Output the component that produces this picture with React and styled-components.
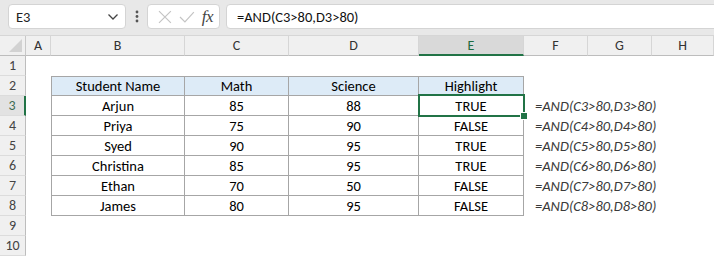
import React from "react";
import styled, { createGlobalStyle } from "styled-components";

const GlobalStyle = createGlobalStyle`
  body {
    margin: 0;
    background: #ffffff;
    font-family: Carlito, "Liberation Sans", Arial, sans-serif;
  }
`;

// formula bar strip
const Toolbar = styled.div`
  height: 36px;
  background: #e8e8e8;
  display: flex;
  align-items: flex-start;
  padding: 4px 0 0 8px;
  box-sizing: border-box;
  overflow: hidden;
  border-bottom: 1px solid #d6d6d6;
`;

const Box = styled.div`
  height: 25px;
  box-sizing: border-box;
  background: #ffffff;
  border: 1px solid #d4d4d4;
  border-radius: 4px;
  display: flex;
  align-items: center;
`;

const NameBox = styled(Box)`
  width: 118px;
  padding: 0 6px 0 7px;
  justify-content: space-between;
  font-size: 14.5px;
  color: #222;
`;

const Dots = styled.div`
  width: 21px;
  display: flex;
  justify-content: center;
  padding-top: 6px;
`;

const FxBox = styled(Box)`
  width: 73px;
  padding: 0 6px 0 10px;
  gap: 7px;
`;

const Fx = styled.span`
  margin-left: auto;
  font-family: "Liberation Serif", serif;
  font-style: italic;
  font-size: 17px;
  color: #444;
  letter-spacing: -0.5px;
`;

const FormulaBox = styled(Box)`
  flex: 1;
  margin-left: 6px;
  margin-right: -8px;
  padding-left: 10px;
  font-size: 14.5px;
  color: #111;
`;

const Sheet = styled.div`
  display: grid;
  grid-template-columns: 26px 25px 134px 104px 130px 105px 64px 64px 62px;
  grid-auto-rows: 20px;
`;

const Corner = styled.div`
  background: #f0f0f0;
  border-right: 1px solid #c8c8c8;
  border-bottom: 1px solid #bdbdbd;
  display: flex;
  align-items: flex-end;
  justify-content: flex-end;
  padding: 0 3px 3px 0;
`;

const ColHead = styled.div`
  background: ${(p) => (p.$active ? "#d9d9d9" : "#f0f0f0")};
  color: ${(p) => (p.$active ? "#1d6b40" : "#333")};
  border-right: 1px solid #d6d6d6;
  border-bottom: ${(p) => (p.$active ? "2px solid #217346" : "1px solid #bdbdbd")};
  display: flex;
  align-items: center;
  justify-content: center;
  font-size: 14px;
`;

const RowHead = styled.div`
  background: ${(p) => (p.$active ? "#e2e2e2" : "#f0f0f0")};
  color: ${(p) => (p.$active ? "#3d6b52" : "#444")};
  border-right: ${(p) => (p.$active ? "2px solid #217346" : "1px solid #bdbdbd")};
  border-bottom: 1px solid #dcdcdc;
  display: flex;
  align-items: center;
  justify-content: center;
  font-size: 14px;
  box-sizing: border-box;
`;

const Cell = styled.div`
  position: relative;
  box-sizing: border-box;
  display: flex;
  align-items: center;
  justify-content: ${(p) => (p.$table ? "center" : "flex-start")};
  white-space: nowrap;
  font-size: 14.5px;
  color: #000;
  background: ${(p) => (p.$head ? "#ddebf7" : p.$table ? "#ffffff" : "transparent")};
  border-right: ${(p) => (p.$table ? "1px solid #a6a6a6" : "none")};
  border-bottom: ${(p) => (p.$table ? "1px solid #a6a6a6" : "none")};
  border-top: ${(p) => (p.$top ? "1px solid #a6a6a6" : "none")};
  border-left: ${(p) => (p.$left ? "1px solid #a6a6a6" : "none")};
  z-index: ${(p) => (p.$raised ? 2 : "auto")};
`;

const Formula = styled.span`
  padding-left: 11px;
  font-style: italic;
  font-size: 14.5px;
  color: #3a3a3a;
`;

const Selection = styled.div`
  position: absolute;
  top: -2px;
  left: -1px;
  right: -2px;
  bottom: -2px;
  border: 2px solid #217346;
  pointer-events: none;
`;

const Handle = styled.div`
  position: absolute;
  right: -5px;
  bottom: -5px;
  width: 6px;
  height: 6px;
  background: #217346;
  border: 1px solid #ffffff;
`;

const cols = ["A", "B", "C", "D", "E", "F", "G", "H"];

const students = [
  ["Arjun", 85, 88],
  ["Priya", 75, 90],
  ["Syed", 90, 95],
  ["Christina", 85, 95],
  ["Ethan", 70, 50],
  ["James", 80, 95],
];

const Chevron = () => (
  <svg width="12" height="8" viewBox="0 0 12 8">
    <path d="M1.5 1.5 L6 6 L10.5 1.5" fill="none" stroke="#444" strokeWidth="1.3" />
  </svg>
);

const VDots = () => (
  <svg width="4" height="13" viewBox="0 0 4 13">
    <circle cx="2" cy="2" r="1.4" fill="#555" />
    <circle cx="2" cy="6.5" r="1.4" fill="#555" />
    <circle cx="2" cy="11" r="1.4" fill="#555" />
  </svg>
);

const Cross = () => (
  <svg width="14" height="14" viewBox="0 0 14 14">
    <path d="M1 1 L13 13 M13 1 L1 13" stroke="#c4c4c4" strokeWidth="1.2" />
  </svg>
);

const Check = () => (
  <svg width="16" height="12" viewBox="0 0 16 12">
    <path d="M1 6 L6 11 L15 1" fill="none" stroke="#c4c4c4" strokeWidth="1.2" />
  </svg>
);

const CornerMark = () => (
  <svg width="13" height="13" viewBox="0 0 13 13">
    <path d="M13 0 L13 13 L0 13 Z" fill="#d2d2d2" />
  </svg>
);

const buildRow = (r) => {
  const out = [];
  const tableRow = r >= 2 && r <= 8;
  const s = tableRow && r > 2 ? students[r - 3] : null;
  const values =
    r === 2
      ? ["Student Name", "Math", "Science", "Highlight"]
      : s
      ? [s[0], s[1], s[2], s[1] > 80 && s[2] > 80 ? "TRUE" : "FALSE"]
      : null;

  out.push(
    <RowHead key={`h${r}`} $active={r === 3}>
      {r}
    </RowHead>
  );
  out.push(<Cell key={`a${r}`} />);
  for (let c = 0; c < 4; c++) {
    const selected = r === 3 && c === 3;
    out.push(
      <Cell
        key={`${c}-${r}`}
        $table={tableRow}
        $head={r === 2}
        $top={r === 2}
        $left={tableRow && c === 0}
        $raised={selected}
      >
        {values ? values[c] : null}
        {selected && (
          <Selection>
            <Handle />
          </Selection>
        )}
      </Cell>
    );
  }
  out.push(
    <Cell key={`f${r}`}>
      {s && <Formula>{`=AND(C${r}>80,D${r}>80)`}</Formula>}
    </Cell>
  );
  out.push(<Cell key={`g${r}`} />);
  out.push(<Cell key={`i${r}`} />);
  return out;
};

export default function App() {
  const rows = [];
  for (let r = 1; r <= 10; r++) rows.push(...buildRow(r));

  return (
    <>
      <GlobalStyle />
      <Toolbar>
        <NameBox>
          E3
          <Chevron />
        </NameBox>
        <Dots>
          <VDots />
        </Dots>
        <FxBox>
          <Cross />
          <Check />
          <Fx>fx</Fx>
        </FxBox>
        <FormulaBox>=AND(C3&gt;80,D3&gt;80)</FormulaBox>
      </Toolbar>
      <Sheet>
        <Corner>
          <CornerMark />
        </Corner>
        {cols.map((c) => (
          <ColHead key={c} $active={c === "E"}>
            {c}
          </ColHead>
        ))}
        {rows}
      </Sheet>
    </>
  );
}
